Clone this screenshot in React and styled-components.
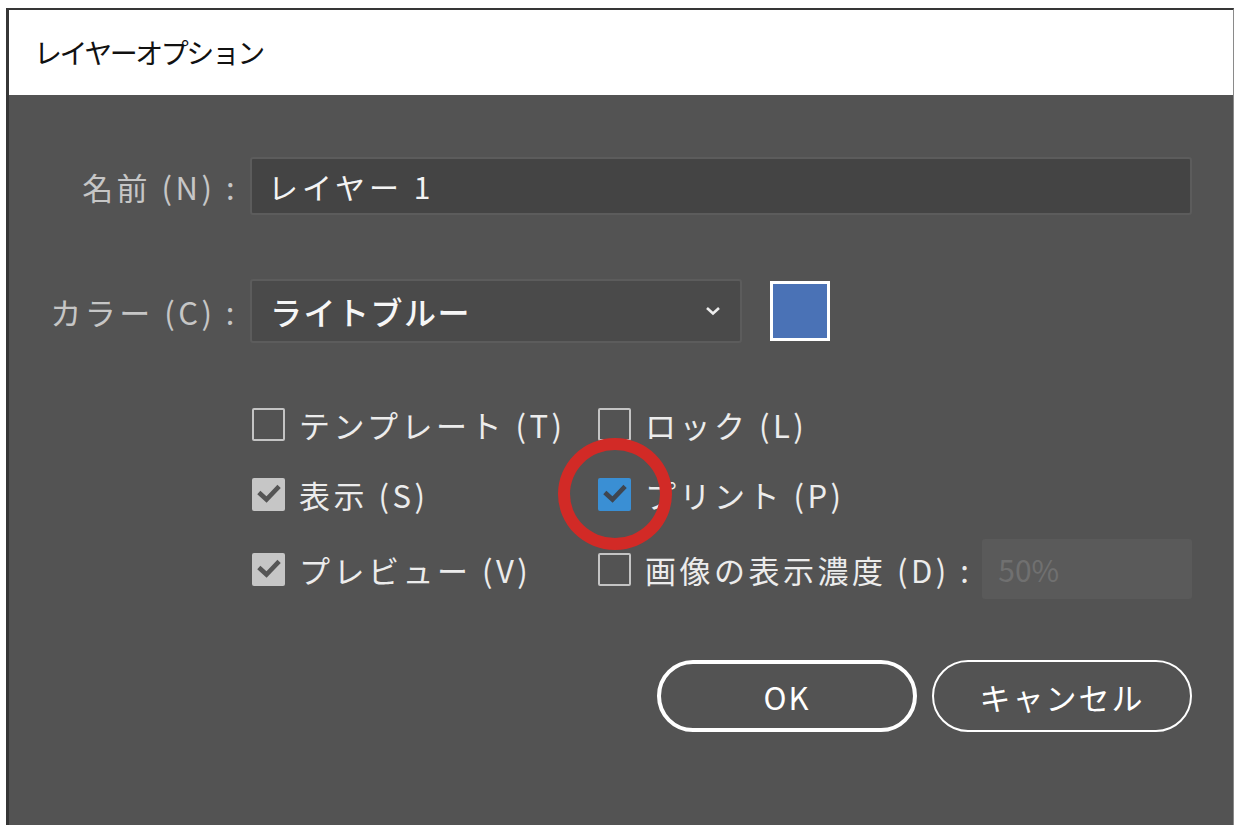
import React from 'react'
import styled, { createGlobalStyle } from 'styled-components'

const GlobalStyle = createGlobalStyle`
  html, body {
    margin: 0;
    padding: 0;
    background: #ffffff;
  }
  body {
    font-family: "Noto Sans CJK JP", "Noto Sans", sans-serif;
  }
`

const FONT = `"Noto Sans CJK JP", "Noto Sans", sans-serif`

const CheckIcon = ({ color }) => (
  <svg width="24" height="20" viewBox="0 0 24 20">
    <path
      d="M3.5 10 L9.5 15.5 L20.5 4"
      fill="none"
      stroke={color}
      strokeWidth="4.6"
      strokeLinecap="square"
      strokeLinejoin="miter"
    />
  </svg>
)

const Checkbox = ({ label, state, mark, children }) => (
  <CheckItem>
    <BoxHolder>
      <Box state={state}>
        {state !== 'off' && (
          <CheckIcon color={state === 'blue' ? '#3f4650' : '#555555'} />
        )}
      </Box>
      {mark && <RedRing />}
    </BoxHolder>
    <CheckLabel>{label}</CheckLabel>
    {children}
  </CheckItem>
)

const App = () => {
  return (
    <>
      <GlobalStyle />
      <Window>
        <TitleBar>
          <Title>レイヤーオプション</Title>
        </TitleBar>
        <Body>
          <FieldRow>
            <FieldLabel>名前 (N) :</FieldLabel>
            <TextInput>レイヤー 1</TextInput>
          </FieldRow>
          <FieldRow gapTop={64}>
            <FieldLabel>カラー (C) :</FieldLabel>
            <ColorLine>
              <Select>
                <SelectText>ライトブルー</SelectText>
                <svg width="18" height="12" viewBox="0 0 18 12">
                  <path
                    d="M3 3 L9 8.5 L15 3"
                    fill="none"
                    stroke="#ededed"
                    strokeWidth="2.6"
                  />
                </svg>
              </Select>
              <Swatch />
            </ColorLine>
          </FieldRow>
          <Options>
            <Checkbox label="テンプレート (T)" state="off" />
            <Checkbox label="ロック (L)" state="off" />
            <Checkbox label="表示 (S)" state="grey" />
            <Checkbox label="プリント (P)" state="blue" mark />
            <Checkbox label="プレビュー (V)" state="grey" />
            <Checkbox label="画像の表示濃度 (D) :" state="off">
              <DimInput>50%</DimInput>
            </Checkbox>
          </Options>
          <Buttons>
            <Button primary>OK</Button>
            <Button>キャンセル</Button>
          </Buttons>
        </Body>
      </Window>
    </>
  )
}

export default App

const Window = styled.div`
  margin: 8px 0 0 6px;
  width: 1228px;
  height: 817px;
  box-sizing: border-box;
  border-top: 2px solid #363636;
  border-left: 3px solid #363636;
  border-right: 1px solid #8a8a8a;
  display: flex;
  flex-direction: column;
`

const TitleBar = styled.div`
  height: 85px;
  flex: none;
  background: #ffffff;
  display: flex;
  align-items: center;
  padding-left: 25px;
`

const Title = styled.div`
  font-family: ${FONT};
  font-size: 28px;
  letter-spacing: -2.5px;
  color: #111111;
  line-height: 1;
  margin-top: -2px;
`

const Body = styled.div`
  flex: 1;
  background: #535353;
  padding: 62px 41px 0 0;
  display: flex;
  flex-direction: column;
`

const FieldRow = styled.div`
  display: grid;
  grid-template-columns: 229px 1fr;
  column-gap: 12px;
  align-items: center;
  margin-top: ${(props) => props.gapTop || 0}px;
`

const FieldLabel = styled.div`
  font-family: ${FONT};
  font-size: 31px;
  letter-spacing: 3.5px;
  color: #c6c6c6;
  text-align: right;
  white-space: nowrap;
`

const TextInput = styled.div`
  height: 58px;
  box-sizing: border-box;
  background: #444444;
  border: 2px solid #5c5c5c;
  border-radius: 3px;
  display: flex;
  align-items: center;
  padding-left: 16px;
  font-family: ${FONT};
  font-size: 30px;
  letter-spacing: 4px;
  color: #f4f4f4;
`

const ColorLine = styled.div`
  display: flex;
  align-items: center;
  gap: 28px;
`

const Select = styled.div`
  width: 492px;
  height: 64px;
  box-sizing: border-box;
  background: #4a4a4a;
  border: 2px solid #5c5c5c;
  border-radius: 3px;
  display: flex;
  align-items: center;
  justify-content: space-between;
  padding: 0 18px 0 18px;
`

const SelectText = styled.span`
  font-family: ${FONT};
  font-size: 32px;
  letter-spacing: 1.5px;
  font-weight: 500;
  color: #f6f6f6;
`

const Swatch = styled.div`
  width: 60px;
  height: 60px;
  box-sizing: border-box;
  border: 3px solid #ffffff;
  background: #4a72b6;
`

const Options = styled.div`
  display: grid;
  grid-template-columns: 346px 1fr;
  grid-template-rows: 50px 50px 60px;
  row-gap: 20px;
  align-items: center;
  margin: 56px 0 0 243px;
`

const CheckItem = styled.div`
  display: flex;
  align-items: center;
`

const BoxHolder = styled.div`
  position: relative;
  width: 33px;
  height: 33px;
  flex: none;
`

const Box = styled.div`
  width: 33px;
  height: 33px;
  box-sizing: border-box;
  border-radius: 2px;
  display: flex;
  align-items: center;
  justify-content: center;
  border: ${(props) =>
    props.state === 'off' ? '2px solid #c4c4c4' : 'none'};
  background: ${(props) =>
    props.state === 'blue'
      ? '#3a8fd4'
      : props.state === 'grey'
      ? '#c6c6c6'
      : 'transparent'};
`

const RedRing = styled.span`
  position: absolute;
  left: 50%;
  top: 50%;
  width: 114px;
  height: 112px;
  box-sizing: border-box;
  transform: translate(-50%, -50%);
  border: 12px solid #d22a26;
  border-radius: 50%;
  pointer-events: none;
`

const CheckLabel = styled.span`
  margin-left: 14px;
  font-family: ${FONT};
  font-size: 31px;
  letter-spacing: 3.5px;
  color: #ececec;
  white-space: nowrap;
`

const DimInput = styled.div`
  margin-left: 10px;
  flex: 1;
  height: 60px;
  box-sizing: border-box;
  background: #5a5a5a;
  border-radius: 3px;
  display: flex;
  align-items: center;
  padding-left: 16px;
  font-family: ${FONT};
  font-size: 30px;
  color: #707070;
`

const Buttons = styled.div`
  display: flex;
  justify-content: flex-end;
  gap: 15px;
  margin-top: 61px;
`

const Button = styled.div`
  width: 260px;
  height: 72px;
  box-sizing: border-box;
  border: ${(props) => (props.primary ? '4px' : '2px')} solid #ffffff;
  border-radius: 36px;
  display: flex;
  align-items: center;
  justify-content: center;
  font-family: ${FONT};
  font-size: 31px;
  letter-spacing: 2px;
  color: #ffffff;
`
